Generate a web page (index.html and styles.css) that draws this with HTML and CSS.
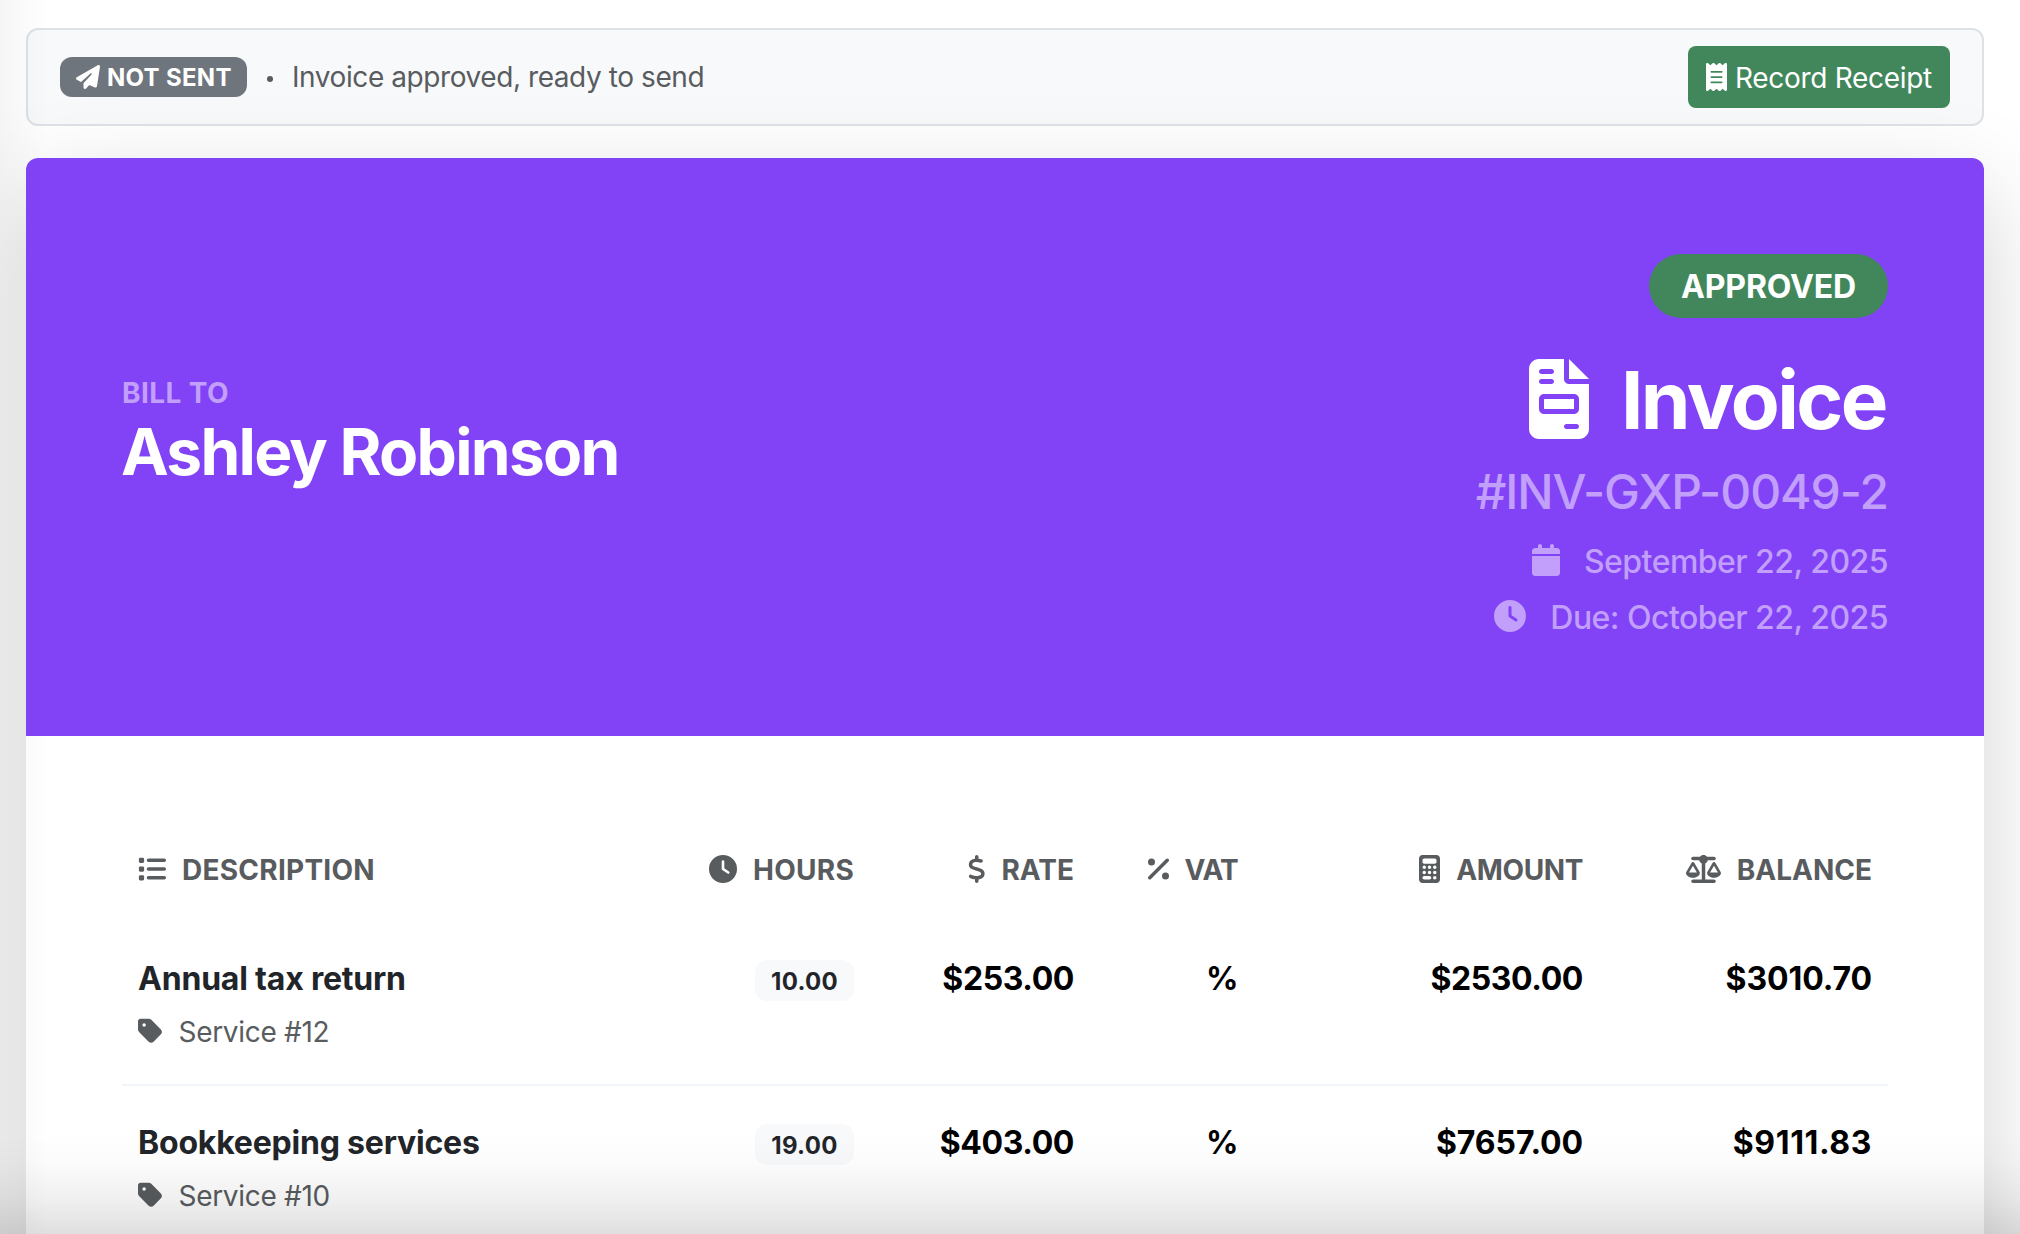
FILE: index.html
```html
<!DOCTYPE html>
<html lang="en">
<head>
<meta charset="utf-8">
<title>Invoice #INV-GXP-0049-2</title>
<link rel="stylesheet" href="styles.css">
</head>
<body>
<svg class="sprite" aria-hidden="true">
  <symbol id="clock" viewBox="0 0 512 512"><path d="M256 0a256 256 0 1 1 0 512A256 256 0 1 1 256 0zM232 120V256c0 8 4 15.500 10.700 20l96 64c11 7.400 25.900 4.400 33.300-6.700s4.400-25.900-6.700-33.300L280 243.200V120c0-13.300-10.700-24-24-24s-24 10.700-24 24z"/></symbol>
  <symbol id="tag" viewBox="0 0 448 512"><path d="M0 80V229.500c0 17 6.700 33.300 18.700 45.300l176 176c25 25 65.500 25 90.500 0L418.700 317.300c25-25 25-65.500 0-90.500l-176-176c-12-12-28.300-18.700-45.300-18.700H48C21.500 32 0 53.500 0 80zm112 32a32 32 0 1 1 0 64 32 32 0 1 1 0-64z"/></symbol>
</svg>

<header class="status-bar">
  <span class="badge-unsent">
    <svg class="icon" viewBox="0 0 512 512"><path d="M498.1 5.600c10.100 7 15.400 19.100 13.500 31.200l-64 416c-1.500 9.700-7.400 18.200-16 23s-18.900 5.400-28 1.600L284 427.700l-68.500 74.100c-8.900 9.700-22.900 12.900-35.200 8.100S160 493.200 160 480V396.400c0-4 1.500-7.800 4.200-10.700L331.800 202.800c5.800-6.300 5.600-16-.4-22s-15.700-6.400-22-.7L106 360.800 17.700 316.600C7.100 311.300 .3 300.700 0 288.900s5.900-22.800 16.100-28.700l448-256c10.700-6.100 23.900-5.500 34 1.400z"/></svg>
    <span>NOT SENT</span>
  </span>
  <span class="dot"></span>
  <span class="status-text">Invoice approved, ready to send</span>
  <button class="btn-receipt" type="button">
    <svg class="icon" viewBox="0 0 384 512"><path d="M14 2.200C22.500-1.700 32.500-.3 39.600 5.800L80 40.400 120.400 5.800c9-7.700 22.300-7.700 31.200 0L192 40.400 232.400 5.800c9-7.700 22.300-7.700 31.200 0L304 40.400 344.400 5.800c7.100-6.100 17.100-7.500 25.600-3.600s14 12.400 14 21.800V488c0 9.400-5.500 17.900-14 21.800s-18.500 2.500-25.600-3.600L304 471.600l-40.400 34.600c-9 7.700-22.300 7.700-31.200 0L192 471.600l-40.400 34.600c-9 7.700-22.300 7.700-31.200 0L80 471.600 39.600 506.200c-7.100 6.100-17.100 7.500-25.600 3.600S0 497.400 0 488V24C0 14.600 5.500 6.100 14 2.200zM96 144c-8.800 0-16 7.200-16 16s7.200 16 16 16H288c8.800 0 16-7.200 16-16s-7.200-16-16-16H96zM80 352c0 8.800 7.200 16 16 16H288c8.800 0 16-7.200 16-16s-7.200-16-16-16H96c-8.800 0-16 7.200-16 16zM96 240c-8.800 0-16 7.200-16 16s7.200 16 16 16H288c8.800 0 16-7.200 16-16s-7.200-16-16-16H96z"/></svg>
    <span>Record Receipt</span>
  </button>
</header>

<main class="invoice">
  <section class="hero">
    <div class="bill-to">
      <div class="bill-label">BILL TO</div>
      <div class="bill-name">Ashley Robinson</div>
    </div>
    <div class="summary">
      <span class="approved">APPROVED</span>
      <h1 class="title">
        <svg class="icon" viewBox="0 0 384 512"><path d="M64 0C28.700 0 0 28.700 0 64V448c0 35.300 28.700 64 64 64H320c35.300 0 64-28.700 64-64V160H256c-17.700 0-32-14.300-32-32V0H64zM256 0V128H384L256 0zM80 64h64c8.800 0 16 7.200 16 16s-7.200 16-16 16H80c-8.800 0-16-7.200-16-16s7.200-16 16-16zm0 64h64c8.800 0 16 7.200 16 16s-7.200 16-16 16H80c-8.800 0-16-7.200-16-16s7.200-16 16-16zm16 96H288c17.700 0 32 14.300 32 32v64c0 17.700-14.300 32-32 32H96c-17.700 0-32-14.300-32-32V256c0-17.700 14.300-32 32-32zm0 32v64H288V256H96zM240 416h64c8.800 0 16 7.200 16 16s-7.200 16-16 16H240c-8.800 0-16-7.200-16-16s7.200-16 16-16z"/></svg>
        <span>Invoice</span>
      </h1>
      <div class="number">#INV-GXP-0049-2</div>
      <div class="date">
        <svg class="icon" viewBox="0 0 448 512"><path d="M96 32V64H48C21.500 64 0 85.500 0 112v48H448V112c0-26.500-21.500-48-48-48H352V32c0-17.700-14.300-32-32-32s-32 14.300-32 32V64H160V32c0-17.700-14.300-32-32-32S96 14.300 96 32zM448 192H0V464c0 26.500 21.500 48 48 48H400c26.500 0 48-21.500 48-48V192z"/></svg>
        <span>September 22, 2025</span>
      </div>
      <div class="date">
        <svg class="icon" viewBox="0 0 512 512"><use href="#clock"/></svg>
        <span>Due: October 22, 2025</span>
      </div>
    </div>
  </section>

  <table class="lines">
    <colgroup><col class="c-desc"><col class="c-hours"><col class="c-rate"><col class="c-vat"><col class="c-amount"><col class="c-balance"></colgroup>
    <thead>
      <tr>
        <th><div class="th"><svg class="icon" viewBox="0 0 512 512"><path d="M40 48C26.700 48 16 58.700 16 72v48c0 13.300 10.700 24 24 24H88c13.300 0 24-10.700 24-24V72c0-13.300-10.700-24-24-24H40zM192 64c-17.700 0-32 14.300-32 32s14.300 32 32 32H480c17.700 0 32-14.300 32-32s-14.300-32-32-32H192zm0 160c-17.700 0-32 14.300-32 32s14.300 32 32 32H480c17.700 0 32-14.300 32-32s-14.300-32-32-32H192zm0 160c-17.700 0-32 14.300-32 32s14.300 32 32 32H480c17.700 0 32-14.300 32-32s-14.300-32-32-32H192zM16 232v48c0 13.300 10.700 24 24 24H88c13.300 0 24-10.700 24-24V232c0-13.300-10.700-24-24-24H40c-13.300 0-24 10.700-24 24zM40 368c-13.300 0-24 10.700-24 24v48c0 13.300 10.700 24 24 24H88c13.300 0 24-10.700 24-24V392c0-13.300-10.700-24-24-24H40z"/></svg><span>DESCRIPTION</span></div></th>
        <th><div class="th"><svg class="icon" viewBox="0 0 512 512"><use href="#clock"/></svg><span>HOURS</span></div></th>
        <th><div class="th"><svg class="icon" viewBox="0 0 320 512"><path d="M160 0c17.700 0 32 14.300 32 32V67.700c1.600 .2 3.100 .4 4.700 .7c.4 .1 .7 .1 1.100 .2l48 8.800c17.400 3.200 28.900 19.900 25.700 37.200s-19.900 28.900-37.200 25.700l-47.500-8.700c-31.300-4.600-58.900-1.500-78.300 6.200s-27.200 18.300-29 28.100c-2 10.700-.5 16.700 1.200 20.400c1.800 3.900 5.500 8.300 12.800 13.200c16.300 10.700 41.300 17.700 73.700 26.300l2.900 .8c28.600 7.600 63.600 16.800 89.600 33.800c14.200 9.300 27.600 21.900 35.900 39.500c8.500 17.900 10.300 37.900 6.400 59.200c-6.900 38-33.100 63.400-65.600 76.700c-13.700 5.600-28.600 9.200-44.400 11V480c0 17.700-14.300 32-32 32s-32-14.300-32-32V445.100c-.4-.1-.9-.1-1.300-.2l-.2 0c-24.400-3.800-64.500-14.300-91.500-26.300c-16.100-7.200-23.400-26.100-16.200-42.200s26.100-23.400 42.200-16.200c20.900 9.300 55.300 18.500 75.200 21.600c31.900 4.700 58.200 2 76-5.300c16.900-6.900 24.600-16.900 26.800-28.900c1.900-10.600 .4-16.700-1.300-20.400c-1.900-4-5.600-8.400-13-13.300c-16.400-10.700-41.500-17.700-74-26.300l-2.800-.7C119.400 279.300 84.400 270 58.400 253c-14.200-9.300-27.500-22-35.800-39.600c-8.400-17.900-10.100-37.900-6.100-59.200C23.700 116 52.300 91.200 84.800 78.300c13.300-5.300 27.900-8.900 43.200-11V32c0-17.700 14.300-32 32-32z"/></svg><span class="even">RATE</span></div></th>
        <th><div class="th"><svg class="icon" viewBox="0 0 384 512"><path d="M374.600 118.600c12.500-12.500 12.500-32.800 0-45.300s-32.800-12.500-45.300 0l-320 320c-12.500 12.500-12.500 32.800 0 45.300s32.800 12.500 45.300 0l320-320zM128 128A64 64 0 1 0 0 128a64 64 0 1 0 128 0zM384 384a64 64 0 1 0 -128 0 64 64 0 1 0 128 0z"/></svg><span class="vat">VAT</span></div></th>
        <th><div class="th"><svg class="icon" viewBox="0 0 384 512"><path fill-rule="evenodd" d="M64 0C28.700 0 0 28.700 0 64V448c0 35.300 28.700 64 64 64H320c35.300 0 64-28.700 64-64V64c0-35.300-28.700-64-64-64H64zM96 64H288c17.700 0 32 14.300 32 32v32c0 17.700-14.300 32-32 32H96c-17.700 0-32-14.300-32-32V96c0-17.700 14.300-32 32-32zm32 160a32 32 0 1 1 -64 0 32 32 0 1 1 64 0zM96 352a32 32 0 1 1 0-64 32 32 0 1 1 0 64zM64 416c0-17.700 14.300-32 32-32h96c17.700 0 32 14.300 32 32s-14.300 32-32 32H96c-17.700 0-32-14.300-32-32zM192 256a32 32 0 1 1 0-64 32 32 0 1 1 0 64zm32 64a32 32 0 1 1 -64 0 32 32 0 1 1 64 0zm64-64a32 32 0 1 1 0-64 32 32 0 1 1 0 64zm32 64a32 32 0 1 1 -64 0 32 32 0 1 1 64 0zM288 448a32 32 0 1 1 0-64 32 32 0 1 1 0 64z"/></svg><span class="amount">AMOUNT</span></div></th>
        <th><div class="th"><svg class="icon" viewBox="0 0 640 512"><path d="M384 32H512c17.700 0 32 14.300 32 32s-14.300 32-32 32H398.400c-5.200 25.800-22.900 47.100-46.400 57.300V448H512c17.700 0 32 14.300 32 32s-14.300 32-32 32H320 128c-17.700 0-32-14.300-32-32s14.300-32 32-32H288V153.300c-23.500-10.300-41.200-31.600-46.400-57.300H128c-17.700 0-32-14.300-32-32s14.300-32 32-32H256c14.600-19.400 37.800-32 64-32s49.400 12.600 64 32zm55.600 288H584.400L512 195.800 439.600 320zM512 416c-62.900 0-115.200-34-126-78.900c-2.600-11 1-22.300 6.700-32.100l95.200-163.200c5-8.600 14.200-13.800 24.100-13.800s19.100 5.300 24.100 13.800l95.200 163.200c5.700 9.800 9.300 21.100 6.700 32.100C627.200 382 574.900 416 512 416zM126.800 195.800L54.400 320H199.300L126.800 195.800zM.9 337.100c-2.600-11 1-22.300 6.700-32.100l95.200-163.200c5-8.600 14.200-13.800 24.100-13.800s19.100 5.300 24.100 13.800l95.200 163.200c5.700 9.800 9.300 21.100 6.700 32.100C242 382 189.700 416 126.800 416S11.700 382 .9 337.100z"/></svg><span class="even">BALANCE</span></div></th>
      </tr>
    </thead>
    <tbody>
      <tr>
        <td>
          <div class="name">Annual tax return</div>
          <div class="service"><svg class="icon" viewBox="0 0 448 512"><use href="#tag"/></svg><span>Service #12</span></div>
        </td>
        <td><div class="hours-cell"><span class="hours">10.00</span></div></td>
        <td class="num">$253.00</td>
        <td class="num">%</td>
        <td class="num">$2530.00</td>
        <td class="num wide">$3010.70</td>
      </tr>
      <tr>
        <td>
          <div class="name">Bookkeeping services</div>
          <div class="service"><svg class="icon" viewBox="0 0 448 512"><use href="#tag"/></svg><span>Service #10</span></div>
        </td>
        <td><div class="hours-cell"><span class="hours">19.00</span></div></td>
        <td class="num">$403.00</td>
        <td class="num">%</td>
        <td class="num wide">$7657.00</td>
        <td class="num wider">$9111.83</td>
      </tr>
    </tbody>
  </table>
</main>

<div class="edge-left"></div>
<div class="edge-bottom"></div>
</body>
</html>
```
FILE: styles.css
```css
* { box-sizing: border-box; }

html { overflow: hidden; }

body {
  margin: 0;
  height: 1234px;
  padding: 28px 36px 0 26px;
  overflow: hidden;
  background: #fff;
  color: #212529;
  font-family: Inter, "Liberation Sans", sans-serif;
  font-size: 28px;
  line-height: 1.5;
}

.sprite { position: absolute; width: 0; height: 0; }

.icon { display: block; flex: none; width: auto; height: 1em; fill: currentColor; }

/* Optical centring of labels that sit beside an icon */
.icon + span { padding-top: 2px; }

.status-bar {
  display: flex;
  align-items: center;
  height: 98px;
  padding: 0 32px;
  border: 2px solid #dee2e6;
  border-radius: 12px;
  background: #f8f9fb;
}

.badge-unsent {
  display: flex;
  align-items: center;
  gap: 7px;
  height: 40px;
  width: 187px;
  padding-left: 16px;
  border-radius: 12px;
  background: #6e757c;
  color: #fff;
  font-size: 24px;
  font-weight: 700;
  line-height: 38px;
  letter-spacing: .3px;
  white-space: nowrap;
}

.dot { width: 6px; height: 6px; margin: 4px 19px 0 20px; border-radius: 50%; background: #595c5f; }

.status-text { color: #595c5f; letter-spacing: -.42px; }

.btn-receipt {
  display: flex;
  align-items: center;
  gap: 8px;
  width: 262px;
  height: 62px;
  margin-left: auto;
  padding: 0 0 0 18px;
  border: 0;
  border-radius: 8px;
  background: #41875b;
  color: #fff;
  font: inherit;
  letter-spacing: -.31px;
  white-space: nowrap;
}

.btn-receipt .icon + span { padding-top: 1px; }

.invoice {
  height: 1300px;
  margin-top: 32px;
  border-radius: 12px;
  background: #fff;
  box-shadow: 0 32px 96px rgba(0, 0, 0, .175);
}

.hero {
  display: flex;
  align-items: center;
  justify-content: space-between;
  height: 578px;
  padding: 96px;
  border-radius: 12px 12px 0 0;
  background: #8243f7;
  color: #fff;
}

.bill-to { padding-bottom: 31px; }

.bill-label { color: #c19ffb; font-weight: 700; letter-spacing: .4px; }

.bill-name { margin-left: -1px; font-size: 64px; font-weight: 700; line-height: 1.200; letter-spacing: -1.740px; }

.summary { display: flex; flex-direction: column; align-items: flex-end; }

.approved {
  width: 239px;
  height: 64px;
  border-radius: 32px;
  background: #41875b;
  font-size: 32px;
  font-weight: 700;
  line-height: 66px;
  letter-spacing: -.15px;
  text-align: center;
}

.title {
  display: flex;
  align-items: center;
  gap: 32px;
  margin: 32px 2px 0 0;
  font-size: 80px;
  font-weight: 700;
  line-height: 95px;
  letter-spacing: -2.540px;
}

.number {
  margin: 16px 0 16px;
  color: #c19ffb;
  font-size: 48px;
  font-weight: 550;
  line-height: 57px;
  letter-spacing: -1.050px;
}

.date {
  display: flex;
  align-items: center;
  gap: 24px;
  height: 48px;
  color: #c19ffb;
  font-size: 32px;
  font-weight: 550;
  line-height: 46px;
  letter-spacing: -.540px;
}

.date .icon + span { padding-top: 3px; }

.date + .date { margin-top: 8px; }

.lines {
  width: 1766px;
  margin: 80px 96px 0;
  border-collapse: collapse;
  table-layout: fixed;
}

.c-desc { width: 528px; }
.c-hours { width: 220px; }
.c-rate { width: 220px; }
.c-vat { width: 164px; }
.c-amount { width: 345px; }
.c-balance { width: 289px; }

.lines th,
.lines td { padding: 32px 16px; text-align: right; vertical-align: top; }

.lines th:first-child,
.lines td:first-child { text-align: left; }

.lines tbody tr { border-bottom: 2px solid #f1f5f9; }

.lines th { height: 106px; font-weight: 700; }

.th {
  display: flex;
  align-items: center;
  justify-content: flex-end;
  gap: 16px;
  height: 42px;
  color: #595c5f;
  letter-spacing: .25px;
}

.lines th:first-child .th { justify-content: flex-start; }

.even { letter-spacing: 0; }
.vat { letter-spacing: -.8px; }
.amount { letter-spacing: -.4px; }

.name { font-size: 32px; font-weight: 700; line-height: 50px; letter-spacing: -.2px; }

.service {
  display: flex;
  align-items: center;
  gap: 16px;
  height: 42px;
  margin-top: 6px;
  color: #595c5f;
  letter-spacing: -.31px;
}

.hours-cell { display: flex; justify-content: flex-end; padding-top: 6px; }

.hours {
  width: 99px;
  height: 41px;
  border-radius: 12px;
  background: #f8f9fb;
  font-size: 24px;
  font-weight: 700;
  line-height: 43px;
  letter-spacing: .29px;
  text-align: center;
}

.lines .num { color: #000; font-size: 32px; font-weight: 700; line-height: 50px; letter-spacing: -.4px; }
.lines .wide { letter-spacing: -.1px; }
.lines .wider { letter-spacing: .6px; }

/* Scroll shadows over the page edges */
.edge-left,
.edge-bottom { position: absolute; left: 0; bottom: 0; pointer-events: none; }

.edge-left { top: 0; width: 48px; background: linear-gradient(to right, rgba(0, 0, 0, .04), rgba(0, 0, 0, 0)); }

.edge-bottom {
  right: 0;
  height: 100px;
  background: linear-gradient(to top, rgba(0, 0, 0, .125), rgba(0, 0, 0, .06) 35%, rgba(0, 0, 0, .015) 70%, rgba(0, 0, 0, 0));
}
```
